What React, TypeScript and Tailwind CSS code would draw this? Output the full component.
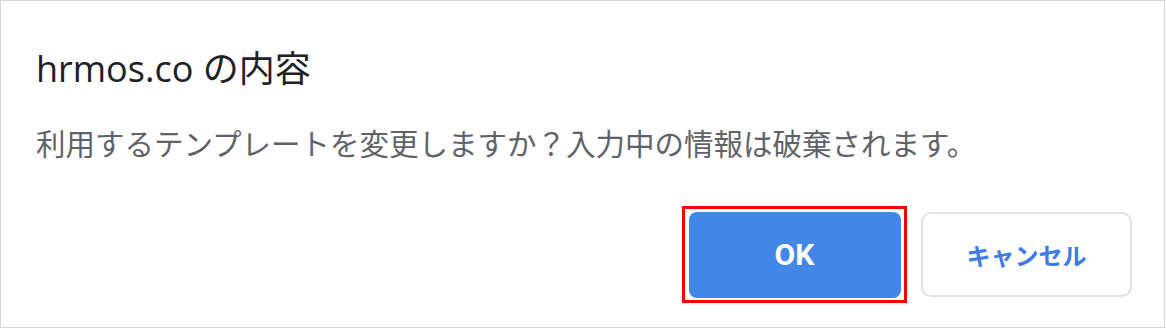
import React from "react";

export default function App() {
  return (
    <div className="w-[1166px] h-[329px] bg-white">
      <div className="w-[1165px] h-[328px] border border-[#d6d6d6] bg-white flex flex-col pl-[35px] pr-[32px]">
        <div
          className="mt-[45px] h-[46px] leading-[46px] text-[36px] text-[#202124] whitespace-nowrap"
          style={{ fontFamily: '"Open Sans", "Noto Sans CJK JP", sans-serif' }}
        >
          hrmos.co の内容
        </div>
        <div
          className="mt-[30px] h-[40px] leading-[40px] text-[29.5px] text-[#5f6368] whitespace-nowrap"
          style={{ fontFamily: '"Noto Sans CJK JP", sans-serif' }}
        >
          利用するテンプレートを変更しますか？入力中の情報は破棄されます。
        </div>
        <div className="mt-[44px] flex justify-end items-center gap-[14px]">
          <div className="border-[3px] border-[#ff0000] w-[225px] h-[97px] flex items-center justify-center">
            <button
              className="w-[212px] h-[86px] rounded-[8px] bg-[#4287e8] text-white text-[30px] font-bold flex items-center justify-center"
              style={{ fontFamily: 'Roboto, "Noto Sans CJK JP", sans-serif' }}
            >
              OK
            </button>
          </div>
          <button
            className="w-[211px] h-[85px] rounded-[10px] border-2 border-[#dfe1e5] bg-white text-[#3d7be6] text-[24px] font-bold flex items-center justify-center"
            style={{ fontFamily: '"Noto Sans CJK JP", sans-serif' }}
          >
            キャンセル
          </button>
        </div>
      </div>
    </div>
  );
}
